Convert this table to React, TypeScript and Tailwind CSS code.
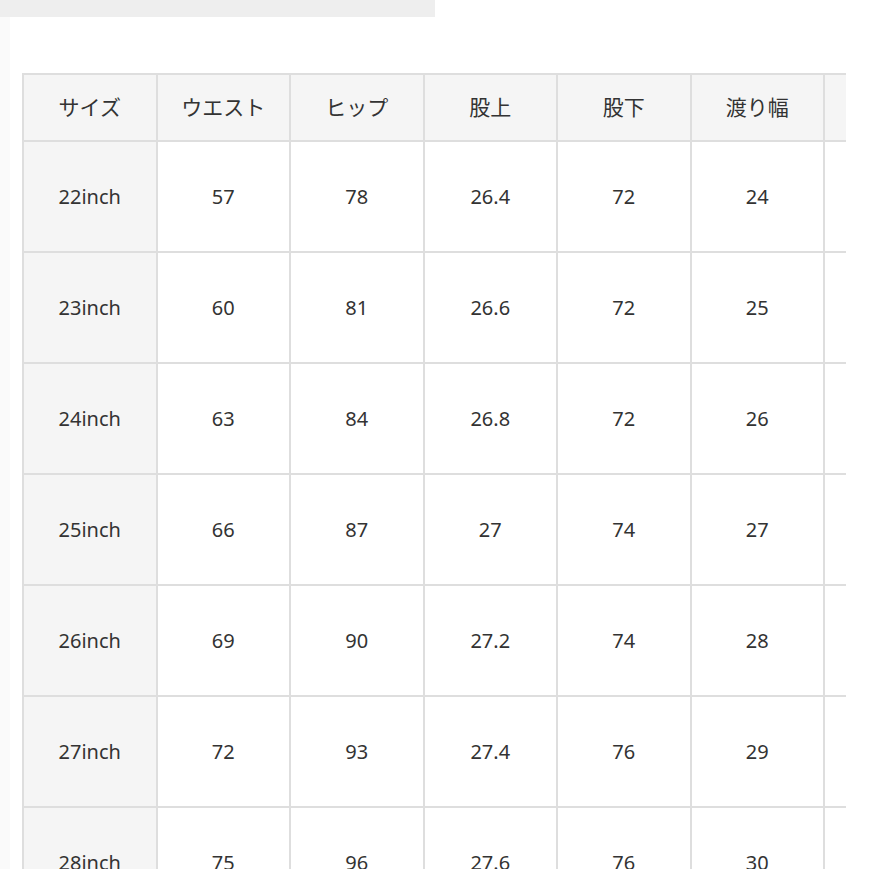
import React from 'react';

const headers = ['サイズ', 'ウエスト', 'ヒップ', '股上', '股下', '渡り幅', ''];

const rows: string[][] = [
  ['22inch', '57', '78', '26.4', '72', '24', ''],
  ['23inch', '60', '81', '26.6', '72', '25', ''],
  ['24inch', '63', '84', '26.8', '72', '26', ''],
  ['25inch', '66', '87', '27', '74', '27', ''],
  ['26inch', '69', '90', '27.2', '74', '28', ''],
  ['27inch', '72', '93', '27.4', '76', '29', ''],
  ['28inch', '75', '96', '27.6', '76', '30', ''],
];

const App: React.FC = () => {
  return (
    <div
      className="relative h-[869px] w-[869px] overflow-hidden bg-white text-[#333333]"
      style={{ fontFamily: '"Noto Sans", "Noto Sans CJK JP", sans-serif' }}
    >
      {/* faint page edge */}
      <div className="absolute left-0 top-0 h-full w-[10px] bg-[#fafafa]" />

      <div className="relative h-[17px] w-[435px] bg-[#eeeeee]" />

      {/* size chart, scrolls sideways */}
      <div className="relative ml-[22px] mt-[56px] w-[824px] overflow-hidden">
        <div className="w-max border-l-2 border-t-2 border-[#dedede]">
          <div className="flex bg-[#f5f5f5]">
            {headers.map((h, i) => (
              <div
                key={i}
                className="flex h-[67px] w-[133.5px] shrink-0 items-center justify-center border-b-2 border-r-2 border-[#dedede] text-[21px]"
              >
                {h}
              </div>
            ))}
          </div>
          {rows.map((row, r) => (
            <div key={r} className="flex">
              {row.map((cell, i) => (
                <div
                  key={i}
                  className={`flex h-[111px] w-[133.5px] shrink-0 items-center justify-center border-b-2 border-r-2 border-[#dedede] text-[20px] ${
                    i === 0 ? 'bg-[#f5f5f5]' : 'bg-white'
                  }`}
                >
                  {cell}
                </div>
              ))}
            </div>
          ))}
        </div>
      </div>
    </div>
  );
};

export default App;
